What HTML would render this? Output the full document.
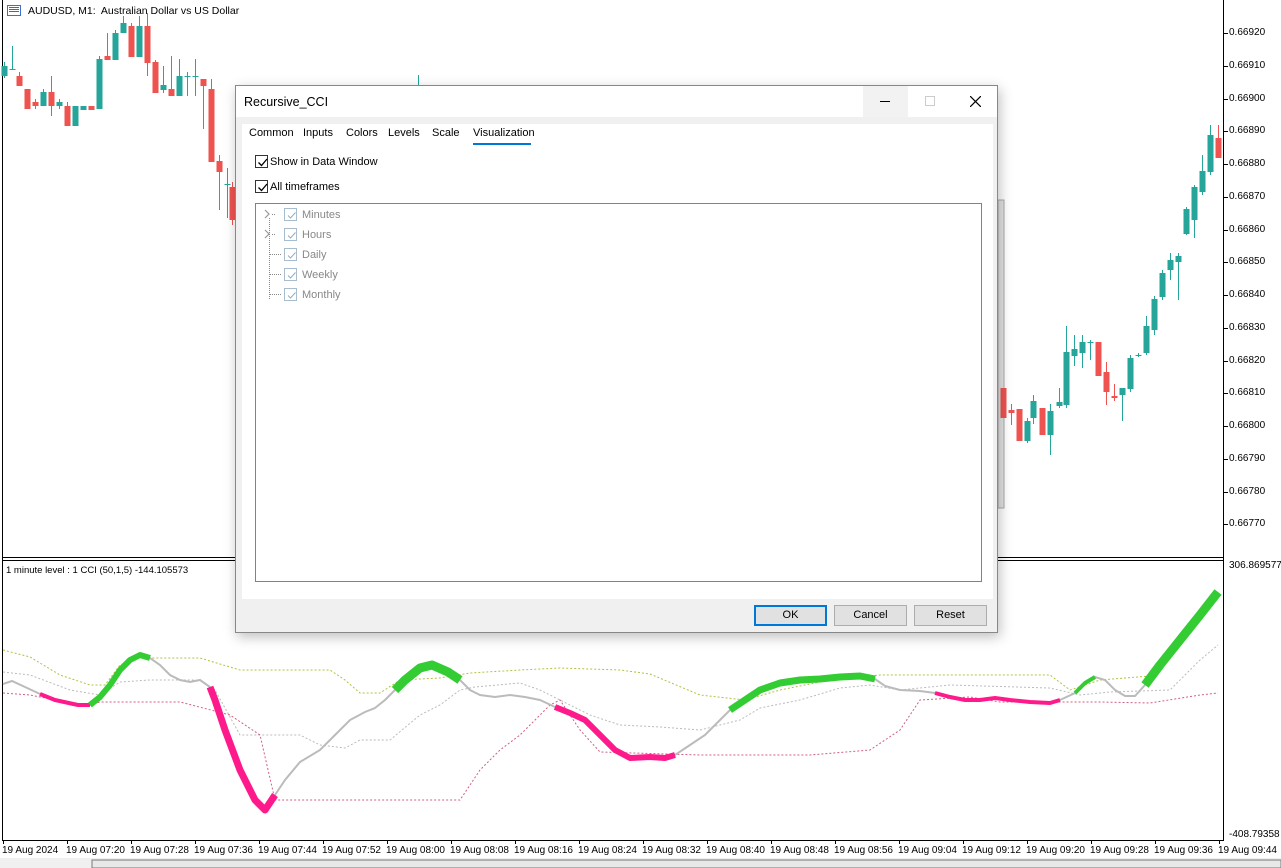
<!DOCTYPE html>
<html><head><meta charset="utf-8">
<style>
*{margin:0;padding:0;box-sizing:border-box}
body{width:1281px;height:868px;overflow:hidden;background:#fff;font-family:"Liberation Sans",sans-serif;position:relative}
.abs{position:absolute}
.pl{font-size:10px;color:#000;position:absolute;left:1229px}
.xl{font-size:10px;position:absolute;top:845px;white-space:nowrap}
.tick{position:absolute;top:840px;width:1px;height:4px;background:#000}
#dlg{left:235px;top:85px;width:763px;height:548px;background:#f0f0f0;border:1px solid #888;box-shadow:2px 4px 12px rgba(0,0,0,.25)}
#tb{position:absolute;left:0;top:0;width:761px;height:31px;background:#fff;font-size:12.5px}
.tab{position:absolute;top:41px;font-size:11px;color:#000}
.cb{position:absolute;width:13px;height:13px;border:1px solid #333;background:#fff}
.cb svg{position:absolute;left:1px;top:1px}
.tr{position:absolute;font-size:11px;color:#888}
.btn{position:absolute;top:519px;width:73px;height:21px;border:1px solid #adadad;background:#e1e1e1;font-size:11px;text-align:center;line-height:19px}
</style></head><body>
<svg class="abs" style="left:0;top:0" width="1281" height="868" id="ch">
<rect x="2" y="0" width="1" height="840" fill="#000"/>
<rect x="1223" y="0" width="1" height="840" fill="#000"/>
<rect x="2" y="557" width="1222" height="1" fill="#000"/>
<rect x="2" y="560" width="1222" height="1" fill="#000"/>
<rect x="2" y="840" width="1222" height="1" fill="#000"/>
<rect x="0" y="858" width="1281" height="10" fill="#f0f0f0"/>
<rect x="92" y="860" width="1189" height="8" fill="#e8e8e8" stroke="#777"/>
<rect x="998" y="200" width="6" height="308" fill="#e4e4e4" stroke="#aaa"/>
<g id="cand"></g>
<g id="ind" fill="none"></g>
</svg>
<div class="abs" style="left:7px;top:5px;width:14px;height:11px;border:1px solid #3b6fd0"><div style="margin:1px;height:1px;background:#d33"></div><div style="margin:1px;height:1px;background:#d33"></div><div style="margin:1px;height:1px;background:#d33"></div></div>
<div class="abs" style="left:28px;top:5px;font-size:10.5px">AUDUSD, M1:&nbsp; Australian Dollar vs US Dollar</div>
<div class="abs" style="left:6px;top:565px;font-size:9.5px">1 minute level : 1 CCI (50,1,5) -144.105573</div>
<div class="pl" style="top:560px">306.869577</div>
<div class="pl" style="top:829px">-408.79358</div>
<div id="axes"></div>

<div id="dlg" class="abs">
 <div id="tb"><span style="position:absolute;left:8px;top:9px">Recursive_CCI</span>
  <div style="position:absolute;left:627px;top:0;width:45px;height:31px;background:#f2f2f2"></div>
  <div style="position:absolute;left:644px;top:15px;width:10px;height:1px;background:#000"></div>
  <div style="position:absolute;left:689px;top:10px;width:10px;height:10px;border:1px solid #ccc"></div>
  <svg style="position:absolute;left:734px;top:10px" width="11" height="11"><path d="M0 0L11 11M11 0L0 11" stroke="#000" stroke-width="1.2"/></svg>
 </div>
 <div style="position:absolute;left:6px;top:38px;width:751px;height:475px;background:#fff"></div>
 <div class="tab" style="left:13px">Common</div>
 <div class="tab" style="left:67px">Inputs</div>
 <div class="tab" style="left:110px">Colors</div>
 <div class="tab" style="left:152px">Levels</div>
 <div class="tab" style="left:196px">Scale</div>
 <div class="tab" style="left:237px">Visualization</div>
 <div style="position:absolute;left:237px;top:57px;width:58px;height:2px;background:#0078d7"></div>
 <div class="cb" style="left:19px;top:69px"><svg width="11" height="11"><path d="M1.5 5.5L4.5 8.5L10 2" stroke="#000" stroke-width="1.3" fill="none"/></svg></div>
 <div style="position:absolute;left:34px;top:70px;font-size:11px">Show in Data Window</div>
 <div class="cb" style="left:19px;top:94px"><svg width="11" height="11"><path d="M1.5 5.5L4.5 8.5L10 2" stroke="#000" stroke-width="1.3" fill="none"/></svg></div>
 <div style="position:absolute;left:34px;top:95px;font-size:11px">All timeframes</div>
 <div style="position:absolute;left:19px;top:117px;width:727px;height:379px;border:1px solid #828282;background:#fff">
  <svg style="position:absolute;left:0;top:0" width="60" height="100">
   <path d="M9 6L13 10L9 14M9 26L13 30L9 34" stroke="#999" fill="none" stroke-width="1.2"/>
   <path d="M16 10.5h3M16 30.5h3M13.5 14v82M14 50.5h12M14 70.5h12M14 90.5h12" stroke="#888" stroke-dasharray="1 1" fill="none"/>
  </svg>
  <div class="cb" style="left:28px;top:4px;border-color:#a8bcd0"><svg width="11" height="11"><path d="M2 5.5L4.5 8L9.5 2.5" stroke="#9ab" fill="none"/></svg></div>
  <div class="tr" style="left:46px;top:5px">Minutes</div>
  <div class="cb" style="left:28px;top:24px;border-color:#a8bcd0"><svg width="11" height="11"><path d="M2 5.5L4.5 8L9.5 2.5" stroke="#9ab" fill="none"/></svg></div>
  <div class="tr" style="left:46px;top:25px">Hours</div>
  <div class="cb" style="left:28px;top:44px;border-color:#a8bcd0"><svg width="11" height="11"><path d="M2 5.5L4.5 8L9.5 2.5" stroke="#9ab" fill="none"/></svg></div>
  <div class="tr" style="left:46px;top:45px">Daily</div>
  <div class="cb" style="left:28px;top:64px;border-color:#a8bcd0"><svg width="11" height="11"><path d="M2 5.5L4.5 8L9.5 2.5" stroke="#9ab" fill="none"/></svg></div>
  <div class="tr" style="left:46px;top:65px">Weekly</div>
  <div class="cb" style="left:28px;top:84px;border-color:#a8bcd0"><svg width="11" height="11"><path d="M2 5.5L4.5 8L9.5 2.5" stroke="#9ab" fill="none"/></svg></div>
  <div class="tr" style="left:46px;top:85px">Monthly</div>
 </div>
 <div class="btn" style="left:518px;border:2px solid #0078d7;line-height:17px">OK</div>
 <div class="btn" style="left:598px">Cancel</div>
 <div class="btn" style="left:678px">Reset</div>
</div>

<script>
var G='#26a69a',R='#ef5350',ns='http://www.w3.org/2000/svg';
function el(p,t,a){var e=document.createElementNS(ns,t);for(var k in a)e.setAttribute(k,a[k]);p.appendChild(e);return e;}
var c=document.getElementById('cand');
var C=[[4,76,66,62,78],[12,69,69,46,70],[19,76,86,72,86],[27,89,109,89,109],[35,102,106,99,109],[43,106,92,89,106],[51,92,106,76,116],[59,106,102,99,109],[67,106,126,102,126],[75,126,106,106,126],[83,110,106,106,110],[91,106,110,106,110],[99,109,59,56,109],[107,56,60,33,60],[115,60,33,30,60],[123,33,23,16,33],[131,26,57,23,57],[139,57,26,16,57],[147,26,63,13,76],[155,62,93,60,93],[163,90,85,66,93],[171,89,96,56,96],[179,96,76,59,96],[187,76,76,72,96],[195,76,76,59,96],[203,79,86,79,129],[211,89,162,79,162],[219,161,172,155,210],[227,184,184,168,218],[232,187,220,182,225],[418,85,85,75,95],
[1003,388,418,388,418],[1011,410,413,404,425],[1019,409,441,409,441],[1027,441,421,418,443],[1033,418,401,395,424],[1042,408,435,408,435],[1050,435,411,404,455],[1059,406,402,388,408],[1066,405,352,326,408],[1074,356,349,335,366],[1082,353,342,335,368],[1090,342,342,340,360],[1098,342,376,342,376],[1106,372,392,362,405],[1114,396,398,384,401],[1122,395,388,388,421],[1130,389,358,355,392],[1138,355,355,353,357],[1146,353,326,316,355],[1154,330,299,296,335],[1162,297,273,270,300],[1170,270,260,253,280],[1178,262,256,253,300],[1186,234,209,207,235],[1194,220,187,185,238],[1202,192,171,155,195],[1210,172,135,125,175],[1218,138,158,125,158]];
C.forEach(function(d){var col=d[2]>d[1]?R:G;
 el(c,'rect',{x:d[0],y:d[3],width:1,height:d[4]-d[3],fill:col});
 var t=Math.min(d[1],d[2]),h=Math.max(1,Math.abs(d[2]-d[1]));
 el(c,'rect',{x:d[0]-2.5,y:t,width:6,height:h,fill:col});});
var I=document.getElementById('ind');
function pts(a){return a.map(function(p){return p.join(',')}).join(' ')}
el(I,'polyline',{points:pts([[3,650],[30,657],[60,675],[90,685],[105,685],[120,665],[140,658],[200,658],[240,670],[330,670],[345,680],[360,693],[380,693],[400,680],[440,678],[470,673],[520,670],[560,668],[620,670],[650,674],[700,695],[745,700],[780,690],[830,680],[880,675],[1050,675],[1070,690],[1100,680],[1150,676]]),stroke:'#b5c040','stroke-dasharray':'2 2','stroke-width':1});
el(I,'polyline',{points:pts([[3,672],[30,675],[70,690],[100,695],[120,682],[150,680],[200,680],[215,690],[240,735],[300,735],[320,745],[345,748],[360,740],[390,740],[420,715],[440,705],[460,690],[475,687],[520,683],[540,690],[560,700],[590,715],[620,725],[660,727],[700,730],[740,720],[760,708],[800,700],[840,688],[870,685],[900,690],[950,685],[1050,688],[1080,695],[1110,692],[1170,690],[1200,660],[1218,645]]),stroke:'#bbb','stroke-dasharray':'2 2','stroke-width':1});
el(I,'polyline',{points:pts([[3,693],[30,695],[70,703],[90,705],[100,702],[180,702],[230,715],[260,735],[275,800],[460,800],[480,770],[500,750],[520,735],[550,705],[560,700],[580,730],[600,752],[700,755],[810,755],[870,750],[900,730],[920,700],[970,697],[1000,702],[1100,702],[1150,703],[1200,695],[1218,693]]),stroke:'#d06080','stroke-dasharray':'2 2','stroke-width':1});
var M=[[3,684],[12,681],[25,687],[40,694],[55,700],[78,705],[90,705],[100,697],[110,685],[120,670],[130,660],[140,655],[150,658],[160,665],[170,675],[180,680],[190,682],[200,680],[210,687],[215,700],[225,730],[240,770],[255,800],[265,810],[275,795],[285,780],[300,762],[320,750],[335,735],[350,720],[365,712],[375,708],[385,700],[395,690],[405,680],[420,668],[432,665],[448,672],[460,680],[470,690],[480,695],[495,697],[510,695],[525,697],[540,700],[555,707],[570,713],[585,720],[600,735],[615,750],[630,758],[650,757],[665,758],[675,755],[690,745],[705,735],[715,725],[730,710],[745,700],[760,690],[780,683],[800,680],[820,679],[840,677],[860,676],[875,679],[885,686],[900,690],[920,691],[935,693],[950,697],[965,700],[980,700],[995,698],[1010,700],[1030,702],[1050,703],[1060,700],[1075,693],[1085,683],[1095,677],[1105,680],[1115,690],[1125,696],[1135,696],[1145,685],[1160,665],[1180,640],[1200,615],[1218,592]];
el(I,'polyline',{points:pts(M),stroke:'#bbb','stroke-width':2});
function seg(a,b,col,w){el(I,'polyline',{points:pts(M.filter(function(p){return p[0]>=a&&p[0]<=b})),stroke:col,'stroke-width':w,'stroke-linejoin':'round'});}
seg(35,95,'#ff1a8c',4);seg(90,150,'#33cc33',6);seg(210,275,'#ff1a8c',7);seg(395,460,'#33cc33',9);
seg(555,680,'#ff1a8c',6);seg(730,875,'#33cc33',7);seg(930,1060,'#ff1a8c',4);seg(1070,1095,'#33cc33',4);seg(1145,1220,'#33cc33',9);
var ax=document.getElementById('axes'),h='';
var pr=['0.66920','0.66910','0.66900','0.66890','0.66880','0.66870','0.66860','0.66850','0.66840','0.66830','0.66820','0.66810','0.66800','0.66790','0.66780','0.66770'];
pr.forEach(function(p,i){var y=33+i*32.75;h+='<div class="pl" style="top:'+(y-6)+'px">'+p+'</div><div class="abs" style="left:1224px;top:'+y+'px;width:4px;height:1px;background:#000"></div>';});
var tl=['19 Aug 2024','19 Aug 07:20','19 Aug 07:28','19 Aug 07:36','19 Aug 07:44','19 Aug 07:52','19 Aug 08:00','19 Aug 08:08','19 Aug 08:16','19 Aug 08:24','19 Aug 08:32','19 Aug 08:40','19 Aug 08:48','19 Aug 08:56','19 Aug 09:04','19 Aug 09:12','19 Aug 09:20','19 Aug 09:28','19 Aug 09:36','19 Aug 09:44'];
tl.forEach(function(t,i){var x=3+i*64;h+='<div class="tick" style="left:'+x+'px"></div><div class="xl" style="left:'+(x-1)+'px">'+t+'</div>';});
ax.innerHTML=h;
</script>
</body></html>
